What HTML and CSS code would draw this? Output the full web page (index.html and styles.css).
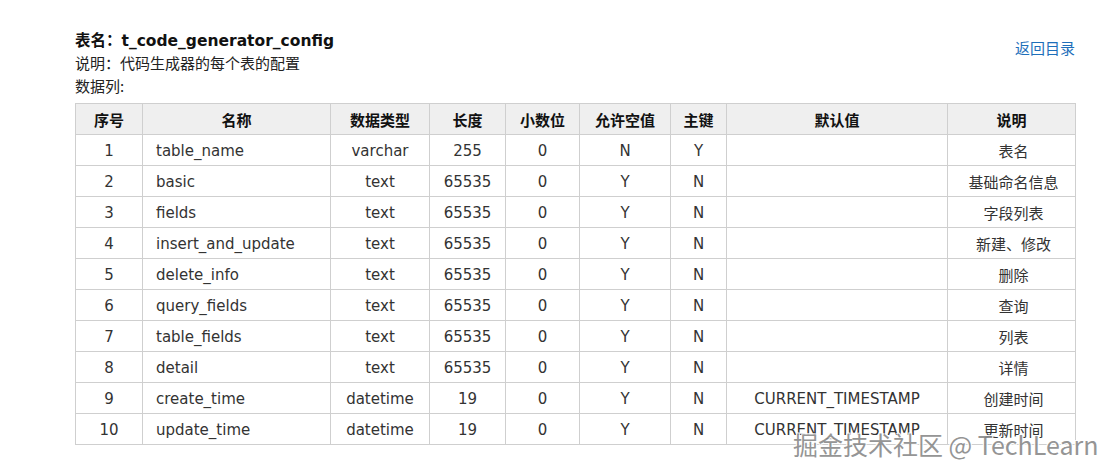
FILE: index.html
```html
<!DOCTYPE html>
<html lang="zh">
<head>
<meta charset="utf-8">
<link rel="stylesheet" href="styles.css">
</head>
<body>
<div class="page">
  <div class="head">
    <div class="info">
      <div class="title">表名：t_code_generator_config</div>
      <div class="line">说明：代码生成器的每个表的配置</div>
      <div class="line">数据列:</div>
    </div>
    <a class="back" href="#">返回目录</a>
  </div>
  <table class="cols">
    <colgroup>
      <col class="c1"><col class="c2"><col class="c3"><col class="c4"><col class="c5"><col class="c6"><col class="c7"><col class="c8"><col class="c9">
    </colgroup>
    <thead>
      <tr><th>序号</th><th>名称</th><th>数据类型</th><th>长度</th><th>小数位</th><th>允许空值</th><th>主键</th><th>默认值</th><th>说明</th></tr>
    </thead>
    <tbody>
      <tr><td>1</td><td class="name">table_name</td><td>varchar</td><td>255</td><td>0</td><td>N</td><td>Y</td><td></td><td class="cn">表名</td></tr>
      <tr><td>2</td><td class="name">basic</td><td>text</td><td>65535</td><td>0</td><td>Y</td><td>N</td><td></td><td class="cn">基础命名信息</td></tr>
      <tr><td>3</td><td class="name">fields</td><td>text</td><td>65535</td><td>0</td><td>Y</td><td>N</td><td></td><td class="cn">字段列表</td></tr>
      <tr><td>4</td><td class="name">insert_and_update</td><td>text</td><td>65535</td><td>0</td><td>Y</td><td>N</td><td></td><td class="cn">新建、修改</td></tr>
      <tr><td>5</td><td class="name">delete_info</td><td>text</td><td>65535</td><td>0</td><td>Y</td><td>N</td><td></td><td class="cn">删除</td></tr>
      <tr><td>6</td><td class="name">query_fields</td><td>text</td><td>65535</td><td>0</td><td>Y</td><td>N</td><td></td><td class="cn">查询</td></tr>
      <tr><td>7</td><td class="name">table_fields</td><td>text</td><td>65535</td><td>0</td><td>Y</td><td>N</td><td></td><td class="cn">列表</td></tr>
      <tr><td>8</td><td class="name">detail</td><td>text</td><td>65535</td><td>0</td><td>Y</td><td>N</td><td></td><td class="cn">详情</td></tr>
      <tr><td>9</td><td class="name">create_time</td><td>datetime</td><td>19</td><td>0</td><td>Y</td><td>N</td><td>CURRENT_TIMESTAMP</td><td class="cn">创建时间</td></tr>
      <tr><td>10</td><td class="name">update_time</td><td>datetime</td><td>19</td><td>0</td><td>Y</td><td>N</td><td>CURRENT_TIMESTAMP</td><td class="cn">更新时间</td></tr>
    </tbody>
  </table>
</div>
<div class="watermark">掘金技术社区 @ TechLearn</div>
</body>
</html>
```

FILE: styles.css
```css
html, body {
  margin: 0;
  padding: 0;
  background: #ffffff;
}
body {
  font-family: "DejaVu Sans", Verdana, "Noto Sans CJK SC", sans-serif;
  color: #222;
  font-size: 14px;
  width: 1120px;
  height: 475px;
  overflow: hidden;
  position: relative;
}
.page {
  padding: 31px 0 0 75px;
  width: 1000px;
}
.head {
  display: flex;
  justify-content: space-between;
  align-items: flex-start;
}
.info {
  display: flex;
  flex-direction: column;
}
.title {
  font-weight: bold;
  font-size: 15.5px;
  line-height: 20px;
  margin-bottom: 1px;
  color: #111;
}
.line {
  font-size: 15px;
  line-height: 22px;
  font-family: "Noto Sans CJK SC", "DejaVu Sans", sans-serif;
  color: #222;
}
.line + .line {
  margin-top: 1px;
}
.back {
  font-family: "Noto Sans CJK SC", sans-serif;
  font-size: 15px;
  color: #1e6fba;
  text-decoration: none;
  margin-top: 7px;
  line-height: 20px;
}
.cols {
  margin-top: 6px;
  border-collapse: collapse;
  table-layout: fixed;
  width: 1000px;
}
.c1 { width: 67px; }
.c2 { width: 188px; }
.c3 { width: 99px; }
.c4 { width: 76px; }
.c5 { width: 74px; }
.c6 { width: 91px; }
.c7 { width: 56px; }
.c8 { width: 221px; }
.c9 { width: 128px; }
.cols th, .cols td {
  border: 1px solid #cfcfcf;
  height: 31px;
  padding: 2px 0 0 0;
  box-sizing: border-box;
  text-align: center;
  font-size: 15px;
  font-family: "DejaVu Sans", "Noto Sans CJK SC", sans-serif;
  color: #333;
  white-space: nowrap;
}
.cols th {
  padding: 0;
  background: #efefef;
  font-family: "Noto Sans CJK SC", sans-serif;
  font-weight: bold;
  color: #111;
}
.cols td.name {
  text-align: left;
  padding-left: 13px;
}
.cols td.cn {
  font-family: "Noto Sans CJK SC", sans-serif;
  padding: 0 0 0 4px;
}
.watermark {
  position: absolute;
  left: 793px;
  top: 426px;
  font-family: "Noto Sans CJK SC", "DejaVu Sans", sans-serif;
  font-size: 25px;
  color: #8a8a8a;
  white-space: nowrap;
  text-shadow: 0 0 1px #fff, 1px 1px 0 #fff, -1px -1px 0 #fff, 1px -1px 0 #fff, -1px 1px 0 #fff;
  opacity: 0.9;
}
```
